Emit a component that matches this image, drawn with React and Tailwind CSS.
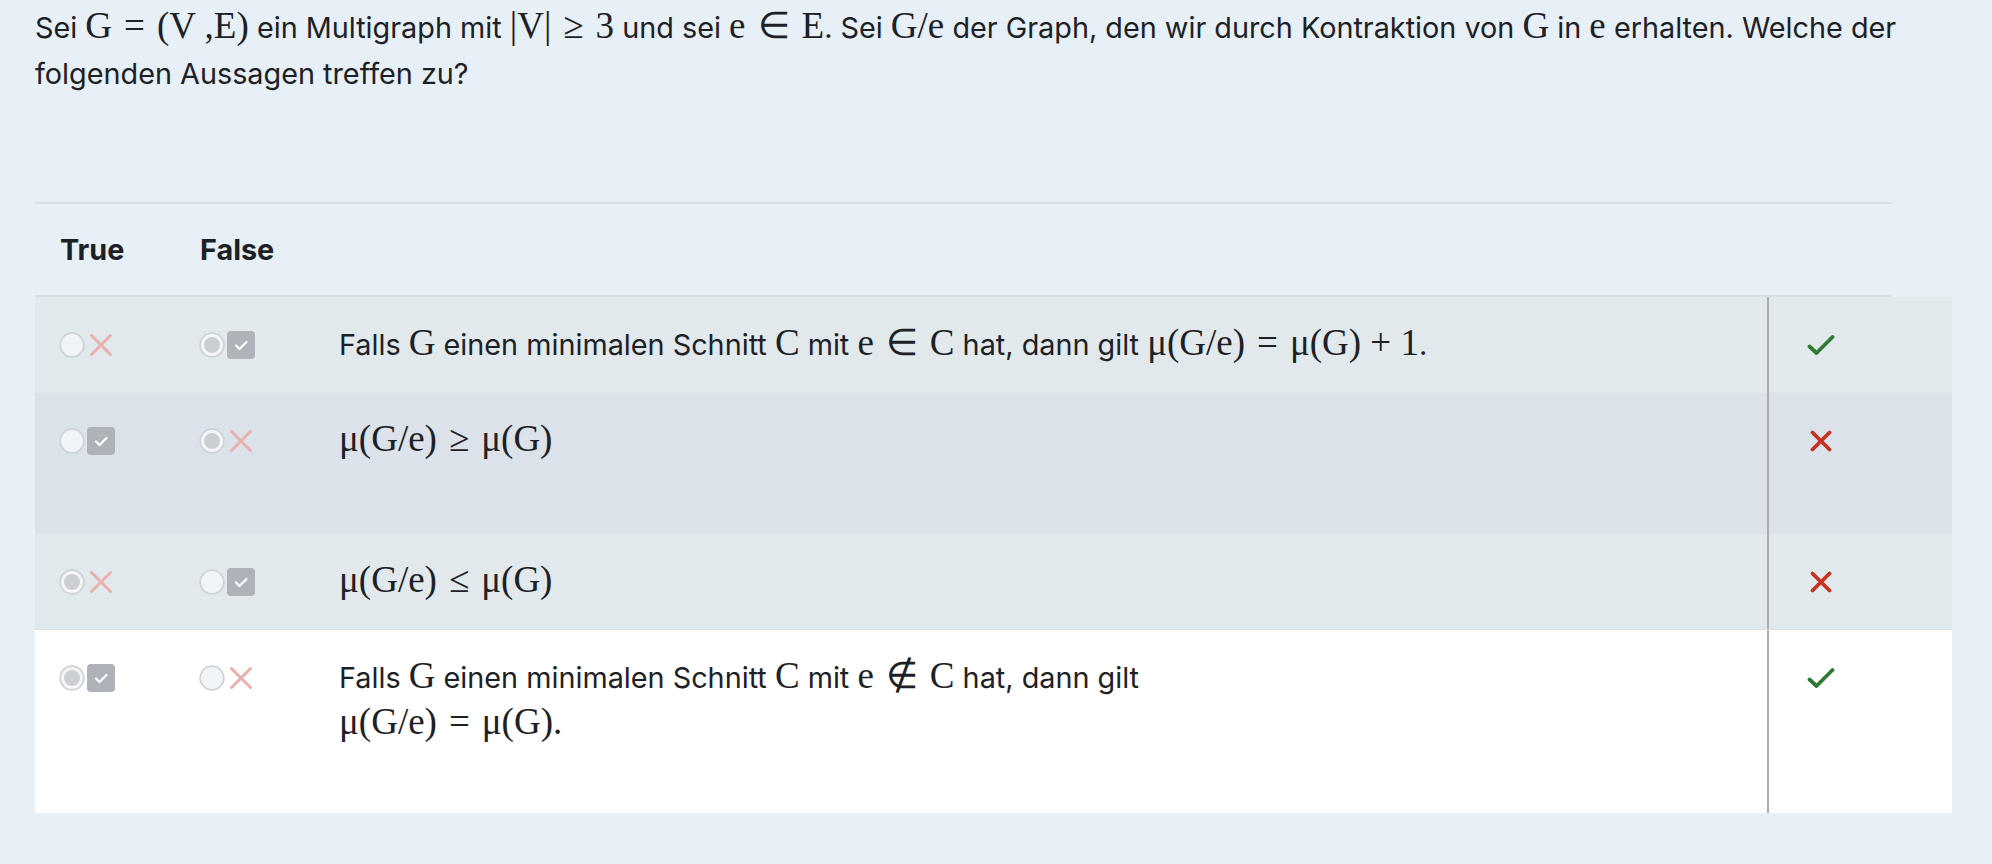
import React from "react";

const M = ({ children }) => (
  <span className="font-['Liberation_Serif',serif] text-[37px] leading-none">{children}</span>
);

// relation symbol with TeX-like thick spacing
const R = ({ children }) => <span className="mx-[12px]">{children}</span>;

const Radio = ({ on }) => (
  <svg width="26" height="26" viewBox="0 0 26 26">
    <circle cx="13" cy="13" r="11.8" fill={on ? "#f4f6f8" : "#f2f5f7"} stroke="#cfd3d7" strokeWidth="1.8" />
    {on && <circle cx="13" cy="13" r="8" fill="#cbcfd3" />}
  </svg>
);

const PinkX = () => (
  <svg width="28" height="28" viewBox="0 0 28 28">
    <path d="M4.5 4.5 L23.5 23.5 M23.5 4.5 L4.5 23.5" stroke="#e9b0ac" strokeWidth="3" strokeLinecap="round" />
  </svg>
);

const GreyCheck = () => (
  <svg width="28" height="28" viewBox="0 0 28 28">
    <rect x="0" y="0" width="28" height="28" rx="4" fill="#adb3b8" />
    <path d="M9 14.5 L12.5 18 L19.5 11" stroke="#fff" strokeWidth="2.2" fill="none" strokeLinecap="round" strokeLinejoin="round" />
  </svg>
);

const Mark = ({ ok }) =>
  ok ? (
    <svg width="28" height="22" viewBox="0 0 28 22">
      <path d="M2.5 12.5 L9.5 19 L25.5 3" stroke="#2f7a33" strokeWidth="3.8" fill="none" strokeLinecap="round" strokeLinejoin="round" />
    </svg>
  ) : (
    <svg width="22" height="22" viewBox="0 0 22 22">
      <path d="M2.5 2.5 L19.5 19.5 M19.5 2.5 L2.5 19.5" stroke="#c9321f" strokeWidth="3.8" strokeLinecap="round" />
    </svg>
  );

const Choice = ({ on, mark }) => (
  <div className="flex h-[46px] items-center gap-[2px]">
    <Radio on={on} />
    {mark === "x" ? <PinkX /> : <GreyCheck />}
  </div>
);

const rows = [
  {
    bg: "bg-[#e1e9ed]",
    pb: "pb-[25px]",
    t: { on: false, mark: "x" },
    f: { on: true, mark: "c" },
    ok: true,
    text: (
      <>
        Falls <M>G</M> einen minimalen Schnitt <M>C</M> mit <M>e<R>∈</R>C</M> hat, dann gilt{" "}
        <M>
          μ(G/e)<R>=</R>μ(G) + 1
        </M>
        .
      </>
    ),
  },
  {
    bg: "bg-[#dbe2e9]",
    pb: "pb-[70px]",
    t: { on: false, mark: "c" },
    f: { on: true, mark: "x" },
    ok: false,
    text: (
      <M>
        μ(G/e)<R>≥</R>μ(G)
      </M>
    ),
  },
  {
    bg: "bg-[#e1e9ed] border-b border-[#d9e0e5]",
    pb: "pb-[24px]",
    t: { on: true, mark: "x" },
    f: { on: false, mark: "c" },
    ok: false,
    text: (
      <M>
        μ(G/e)<R>≤</R>μ(G)
      </M>
    ),
  },
  {
    bg: "bg-white",
    pb: "pb-[66px]",
    t: { on: true, mark: "c" },
    f: { on: false, mark: "x" },
    ok: true,
    text: (
      <>
        Falls <M>G</M> einen minimalen Schnitt <M>C</M> mit <M>e<R>∉</R>C</M> hat, dann gilt
        <br />
        <M>
          μ(G/e)<R>=</R>μ(G).
        </M>
      </>
    ),
  },
];

export default function App() {
  return (
    <div className="min-h-screen bg-[#e7eff7] pl-[35px] pt-[5px] font-['Inter','Liberation_Sans',sans-serif] text-[28.8px] leading-[46px] text-[#1d2125]">
      <p className="w-[1917px]">
        Sei{" "}
        <M>
          G<R>=</R>(V ,E)
        </M>{" "}
        ein Multigraph mit{" "}
        <M>
          |V|<R>≥</R>3
        </M>{" "}
        und sei{" "}
        <M>
          e<R>∈</R>E
        </M>
        . Sei <M>G/e</M> der Graph, den wir durch Kontraktion von <M>G</M> in <M>e</M> erhalten. Welche der
        <br />
        folgenden Aussagen treffen zu?
      </p>

      <div className="mt-[105px] flex h-[95px] w-[1857px] items-center border-y-2 border-[#d9e0e6] font-bold">
        <div className="w-[140px] pl-[25px]">True</div>
        <div className="w-[140px] pl-[25px]">False</div>
      </div>

      <div className="w-[1917px]">
        {rows.map((r, i) => (
          <div key={i} className={`flex ${r.bg}`}>
            <div className={`flex w-[1732px] items-start pt-[25px] ${r.pb}`}>
              <div className="w-[140px] pl-[24px]">
                <Choice {...r.t} />
              </div>
              <div className="w-[140px] pl-[24px]">
                <Choice {...r.f} />
              </div>
              <div className="flex-1 pl-[24px]">{r.text}</div>
            </div>
            <div className="flex-1 border-l-2 border-[#a9adb1] pl-[38px] pt-[25px]">
              <div className="flex h-[46px] w-[28px] items-center justify-center">
                <Mark ok={r.ok} />
              </div>
            </div>
          </div>
        ))}
      </div>
    </div>
  );
}
